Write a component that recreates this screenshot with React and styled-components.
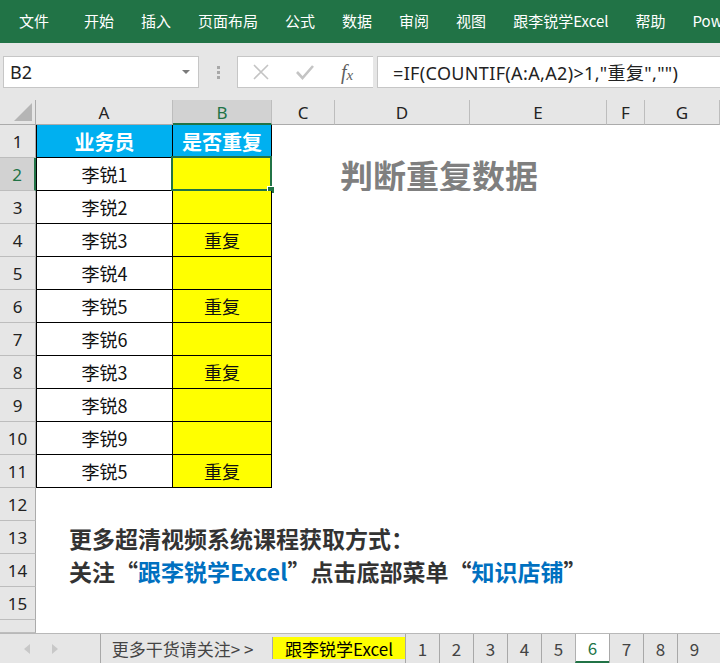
import React from 'react';
import styled, { createGlobalStyle } from 'styled-components';

const GlobalStyle = createGlobalStyle`
  html, body {
    margin: 0;
    padding: 0;
    background: #ffffff;
  }
  body {
    width: 720px;
    height: 663px;
    overflow: hidden;
    font-family: 'Noto Sans', 'Noto Sans CJK SC', sans-serif;
  }
`;

const GREEN = '#217346';
const FONT = `'Noto Sans', 'Noto Sans CJK SC', sans-serif`;

const menuItems = ['文件', '开始', '插入', '页面布局', '公式', '数据', '审阅', '视图', '跟李锐学Excel', '帮助', 'Power Pivot'];

const rows = [
  { name: '李锐1', dup: '' },
  { name: '李锐2', dup: '' },
  { name: '李锐3', dup: '重复' },
  { name: '李锐4', dup: '' },
  { name: '李锐5', dup: '重复' },
  { name: '李锐6', dup: '' },
  { name: '李锐3', dup: '重复' },
  { name: '李锐8', dup: '' },
  { name: '李锐9', dup: '' },
  { name: '李锐5', dup: '重复' },
];

const columns = [
  { label: 'A', width: 137 },
  { label: 'B', width: 99, active: true },
  { label: 'C', width: 63 },
  { label: 'D', width: 135 },
  { label: 'E', width: 137 },
  { label: 'F', width: 38 },
  { label: 'G', width: 75 },
];

const sheetTabs = ['1', '2', '3', '4', '5', '6', '7', '8', '9'];

const App = () => {
  return (
    <>
      <GlobalStyle />
      <Window>
        <Ribbon>
          {menuItems.map((m, i) => (
            <MenuTab key={m} first={i === 0}>{m}</MenuTab>
          ))}
        </Ribbon>

        <FormulaBar>
          <NameBox>
            <span>B2</span>
            <DropArrow />
          </NameBox>
          <Grip>
            <i /><i /><i />
          </Grip>
          <FxBox>
            <svg width="18" height="18" viewBox="0 0 18 18">
              <path d="M2 2 L16 16 M16 2 L2 16" stroke="#c4c4c4" strokeWidth="1.6" fill="none" />
            </svg>
            <svg width="20" height="18" viewBox="0 0 20 18">
              <path d="M2 9 L7.5 15 L18 3" stroke="#c4c4c4" strokeWidth="2.6" fill="none" />
            </svg>
            <FxText>
              f<sub>x</sub>
            </FxText>
          </FxBox>
          <FormulaInput>=IF(COUNTIF(A:A,A2)&gt;1,"重复","")</FormulaInput>
        </FormulaBar>

        <Sheet>
          <Corner>
            <svg width="18" height="18" viewBox="0 0 18 18">
              <path d="M18 0 L18 18 L0 18 Z" fill="#b5b5b5" />
            </svg>
          </Corner>
          {columns.map((c) => (
            <ColHead key={c.label} active={c.active}>{c.label}</ColHead>
          ))}

          <RowHead>1</RowHead>
          <TitleCell first>业务员</TitleCell>
          <TitleCell>是否重复</TitleCell>
          <Blank span={5} />

          {rows.map((r, i) => {
            const n = i + 2;
            return (
              <React.Fragment key={n}>
                <RowHead active={n === 2}>{n}</RowHead>
                <NameCell>{r.name}</NameCell>
                <DupCell>
                  {r.dup}
                  {n === 2 && (
                    <Selection>
                      <FillHandle />
                    </Selection>
                  )}
                </DupCell>
                {n === 2 ? <Heading span={5}>判断重复数据</Heading> : <Blank span={5} />}
              </React.Fragment>
            );
          })}

          <RowHead>12</RowHead>
          <Blank span={7} />
          <RowHead>13</RowHead>
          <Note span={7}>更多超清视频系统课程获取方式：</Note>
          <RowHead>14</RowHead>
          <Note span={7}>
            关注“<Blue>跟李锐学Excel</Blue>”点击底部菜单“<Blue>知识店铺</Blue>”
          </Note>
          <RowHead>15</RowHead>
          <Blank span={7} />
          <RowHead />
          <Blank span={7} />
        </Sheet>

        <TabBar>
          <NavArrows>
            <svg width="8" height="12" viewBox="0 0 8 12">
              <path d="M7 1 L1 6 L7 11 Z" fill="#c8c8c8" />
            </svg>
            <svg width="8" height="12" viewBox="0 0 8 12">
              <path d="M1 1 L7 6 L1 11 Z" fill="#c8c8c8" />
            </svg>
          </NavArrows>
          <SheetTab wide>更多干货请关注&gt; &gt;</SheetTab>
          <SheetTab highlight>跟李锐学Excel</SheetTab>
          {sheetTabs.map((t) => (
            <SheetTab key={t} active={t === '6'}>{t}</SheetTab>
          ))}
        </TabBar>
      </Window>
    </>
  );
};

const Window = styled.div`
  width: 720px;
  height: 663px;
  display: flex;
  flex-direction: column;
  overflow: hidden;
  background: #ffffff;
`;

const Ribbon = styled.div`
  height: 43px;
  flex-shrink: 0;
  background: ${GREEN};
  display: flex;
  align-items: center;
  padding-left: 19px;
  gap: 27px;
  white-space: nowrap;
  overflow: hidden;
`;

const MenuTab = styled.div`
  font-family: 'Noto Sans CJK SC', 'Noto Sans', sans-serif;
  font-size: 15px;
  color: #ffffff;
  margin-right: ${(p) => (p.first ? '8px' : '0')};
  padding-bottom: 2px;
`;

const FormulaBar = styled.div`
  height: 57px;
  flex-shrink: 0;
  background: #e6e6e6;
  display: flex;
  align-items: flex-start;
  padding: 13px 0 0 3px;
  box-sizing: border-box;
  overflow: hidden;
`;

const NameBox = styled.div`
  width: 196px;
  height: 32px;
  box-sizing: border-box;
  background: #ffffff;
  border: 1px solid #c6c6c6;
  display: flex;
  align-items: center;
  justify-content: space-between;
  padding: 0 8px 0 6px;
  font-family: ${FONT};
  font-size: 18px;
  color: #222;
`;

const DropArrow = styled.span`
  width: 0;
  height: 0;
  border-left: 4px solid transparent;
  border-right: 4px solid transparent;
  border-top: 4px solid #7a7a7a;
`;

const Grip = styled.div`
  width: 38px;
  height: 32px;
  display: flex;
  flex-direction: column;
  align-items: center;
  justify-content: center;
  gap: 2px;

  i {
    width: 3px;
    height: 3px;
    background: #a8a8a8;
  }
`;

const FxBox = styled.div`
  width: 136px;
  height: 32px;
  box-sizing: border-box;
  background: #ffffff;
  border: 1px solid #c6c6c6;
  border-right: none;
  display: flex;
  align-items: center;
  padding-left: 14px;
  gap: 25px;
`;

const FxText = styled.span`
  font-family: 'Liberation Serif', 'DejaVu Serif', serif;
  font-style: italic;
  font-size: 20px;
  color: #606060;
  margin-left: 1px;
  line-height: 1;

  sub {
    font-size: 15px;
    vertical-align: -1px;
  }
`;

const FormulaInput = styled.div`
  flex: 1;
  height: 32px;
  box-sizing: border-box;
  margin-left: 4px;
  background: #ffffff;
  border: 1px solid #c6c6c6;
  border-right: none;
  display: flex;
  align-items: center;
  padding-left: 15px;
  font-family: ${FONT};
  font-size: 18px;
  letter-spacing: 0.35px;
  color: #222;
  white-space: nowrap;
`;

const Sheet = styled.div`
  flex: 1;
  display: grid;
  grid-template-columns: 36px 137px 99px 63px 135px 137px 38px 1fr;
  grid-template-rows: 25px repeat(15, 33px) 1fr;
  overflow: hidden;
`;

const Corner = styled.div`
  background: #e6e6e6;
  border-right: 1px solid #ababab;
  border-bottom: 1px solid #ababab;
  box-sizing: border-box;
  display: flex;
  align-items: flex-end;
  justify-content: flex-end;
  padding: 0 3px 3px 0;
`;

const ColHead = styled.div`
  background: ${(p) => (p.active ? '#d2d2d2' : '#e6e6e6')};
  border-right: 1px solid #bdbdbd;
  border-bottom: ${(p) => (p.active ? `2px solid ${GREEN}` : '1px solid #ababab')};
  box-sizing: border-box;
  display: flex;
  align-items: center;
  justify-content: center;
  padding-top: ${(p) => (p.active ? '1px' : '0')};
  font-family: ${FONT};
  font-size: 17px;
  color: ${(p) => (p.active ? GREEN : '#222')};
`;

const RowHead = styled.div`
  background: ${(p) => (p.active ? '#d2d2d2' : '#e6e6e6')};
  border-right: ${(p) => (p.active ? `2px solid ${GREEN}` : '1px solid #ababab')};
  border-bottom: 1px solid #bdbdbd;
  box-sizing: border-box;
  display: flex;
  align-items: center;
  justify-content: center;
  font-family: ${FONT};
  font-size: 17px;
  color: ${(p) => (p.active ? GREEN : '#222')};
`;

const TableCell = styled.div`
  box-sizing: border-box;
  border-right: 1px solid #000;
  border-bottom: 1px solid #000;
  display: flex;
  align-items: center;
  justify-content: center;
  font-family: 'Noto Sans CJK SC', 'Noto Sans', sans-serif;
  font-size: 18px;
  color: #111;
`;

const TitleCell = styled(TableCell)`
  background: #00b0f0;
  color: #ffffff;
  font-weight: 700;
  font-size: 20px;
  border-left: ${(p) => (p.first ? '1px solid #000' : 'none')};
`;

const NameCell = styled(TableCell)`
  background: #ffffff;
  border-left: 1px solid #000;
`;

const DupCell = styled(TableCell)`
  background: #ffff00;
  position: relative;
`;

const Selection = styled.span`
  position: absolute;
  top: -2px;
  left: -2px;
  right: -1px;
  bottom: -1px;
  border: 2px solid ${GREEN};
  pointer-events: none;
`;

const FillHandle = styled.span`
  position: absolute;
  right: -5px;
  bottom: -5px;
  width: 6px;
  height: 6px;
  background: ${GREEN};
  border: 1px solid #ffffff;
`;

const Blank = styled.div`
  grid-column: span ${(p) => p.span};
  background: #ffffff;
`;

const Heading = styled.div`
  grid-column: span ${(p) => p.span};
  display: flex;
  align-items: center;
  padding: 0 0 0 68px;
  font-family: 'Noto Sans CJK SC', sans-serif;
  font-size: 33px;
  font-weight: 700;
  color: #7f7f7f;
  white-space: nowrap;
  overflow: visible;
`;

const Note = styled.div`
  grid-column: span ${(p) => p.span};
  display: flex;
  align-items: center;
  padding-left: 33px;
  font-family: 'Noto Sans CJK SC', 'Noto Sans', sans-serif;
  font-size: 23px;
  font-weight: 700;
  color: #333333;
  white-space: nowrap;
`;

const Blue = styled.span`
  color: #0070c0;
`;

const TabBar = styled.div`
  height: 30px;
  flex-shrink: 0;
  background: #e6e6e6;
  border-top: 1px solid #b8b8b8;
  box-sizing: border-box;
  display: flex;
  align-items: stretch;
  overflow: hidden;
`;

const NavArrows = styled.div`
  width: 100px;
  display: flex;
  align-items: center;
  padding-left: 23px;
  gap: 20px;
  box-sizing: border-box;
`;

const SheetTab = styled.div`
  flex-shrink: 0;
  display: flex;
  align-items: center;
  justify-content: center;
  box-sizing: border-box;
  width: ${(p) => (p.wide ? '172px' : p.highlight ? '133px' : '34px')};
  padding: ${(p) => (p.wide ? '0 8px 0 0' : '0')};
  margin: ${(p) => (p.highlight ? '3px 0 4px' : '0')};
  background: ${(p) => (p.active ? '#ffffff' : p.highlight ? '#ffff00' : 'transparent')};
  border-left: 1px solid ${(p) => (p.active ? '#b0b0b0' : '#a8a8a8')};
  border-bottom: ${(p) => (p.active ? `2px solid ${GREEN}` : 'none')};
  font-family: 'Noto Sans CJK SC', 'Noto Sans', sans-serif;
  font-size: 17px;
  color: ${(p) => (p.active ? GREEN : p.highlight ? '#000' : '#444')};
  white-space: nowrap;
`;

export default App;
